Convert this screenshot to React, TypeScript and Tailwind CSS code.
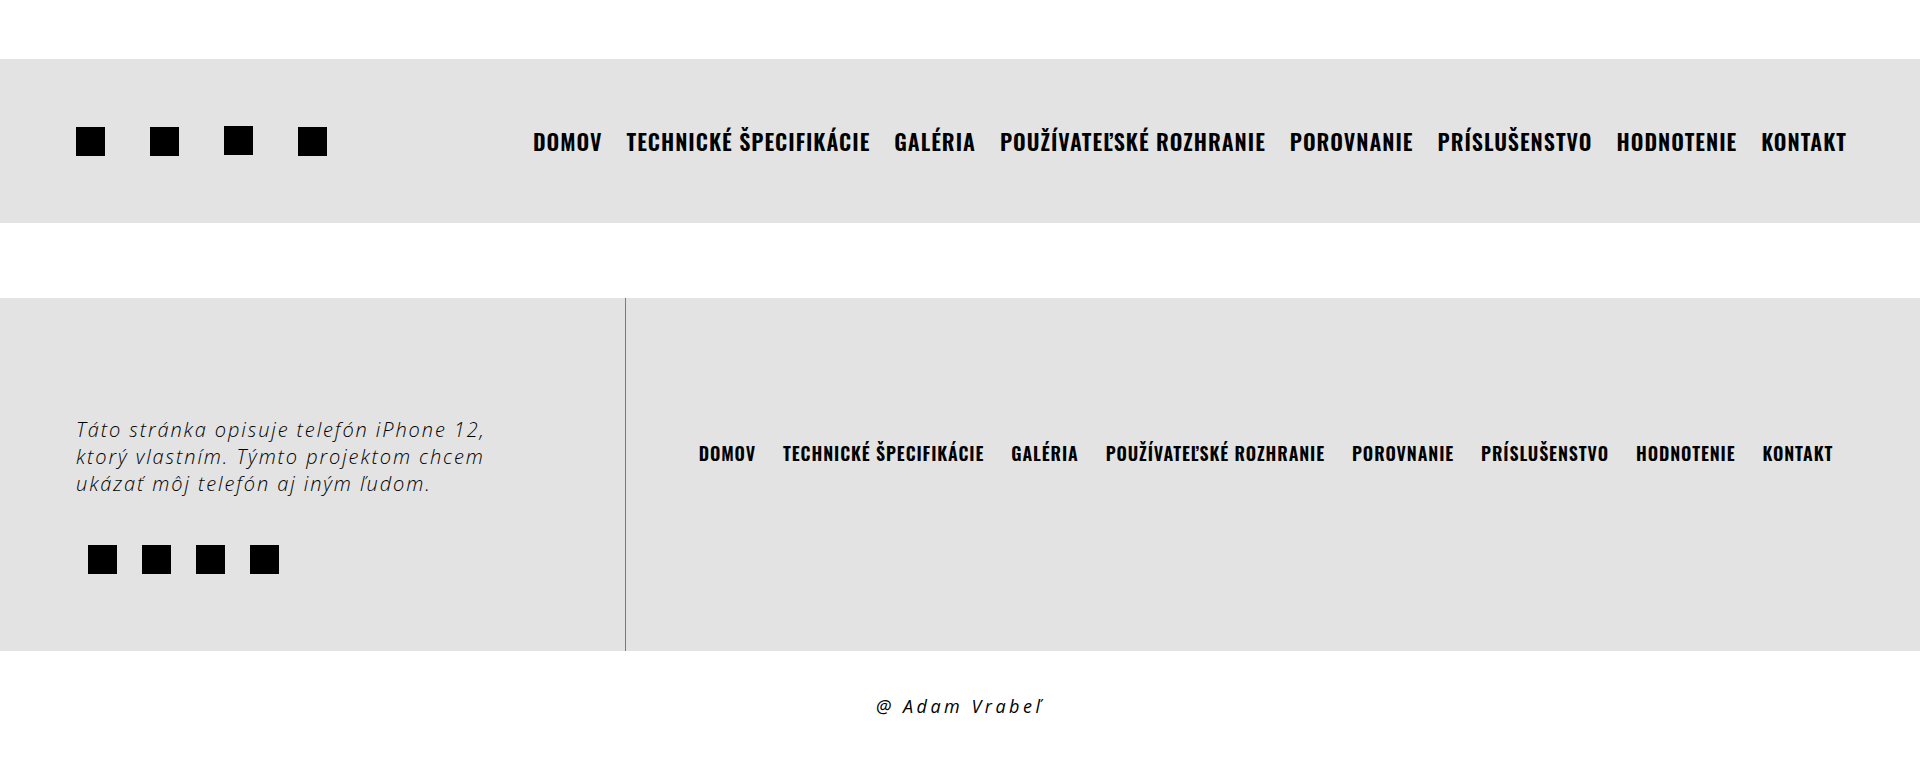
import React from 'react';

const links = [
  'DOMOV',
  'TECHNICKÉ ŠPECIFIKÁCIE',
  'GALÉRIA',
  'POUŽÍVATEĽSKÉ ROZHRANIE',
  'POROVNANIE',
  'PRÍSLUŠENSTVO',
  'HODNOTENIE',
  'KONTAKT',
];

const navFont = "font-['Oswald','Liberation_Sans',sans-serif]";

const Box = ({ className = '' }: { className?: string }) => (
  <span className={`block w-[29px] h-[29px] bg-black ${className}`} />
);

const Header = () => (
  <header className="mt-[59px] h-[164px] bg-[#e3e3e3] flex items-center justify-between pl-[76px] pr-[73px]">
    <div className="flex items-center gap-[45px]">
      <Box />
      <Box />
      <Box className="-translate-y-px" />
      <Box />
    </div>
    <nav className={`flex items-center gap-[24px] ${navFont}`}>
      {links.map((l) => (
        <a key={l} href="#" className="whitespace-nowrap text-[22px] font-semibold text-black tracking-[1px] leading-none">
          {l}
        </a>
      ))}
    </nav>
  </header>
);

const Info = () => (
  <section className="mt-[75px] h-[353px] bg-[#e3e3e3] flex">
    <div className="w-[626px] shrink-0 border-r border-[#7a7a7a] pl-[76px] pt-[118px]">
      <p className="w-[440px] text-[20px] leading-[27px] italic font-[350] tracking-[1.9px] text-black font-['Open_Sans',sans-serif]">
        Táto stránka opisuje telefón iPhone 12, ktorý vlastním. Týmto projektom chcem ukázať môj telefón aj iným ľudom.
      </p>
      <div className="mt-[48px] ml-[12px] flex gap-[25px]">
        <Box />
        <Box />
        <Box />
        <Box />
      </div>
    </div>
    <div className="flex-1 flex justify-center pt-[146px] pr-[14px]">
      <nav className={`flex items-start gap-[27px] ${navFont}`}>
        {links.map((l) => (
          <a key={l} href="#" className="whitespace-nowrap text-[18px] font-semibold text-black tracking-[0.9px] leading-none">
            {l}
          </a>
        ))}
      </nav>
    </div>
  </section>
);

const Footer = () => (
  <footer className="h-[110px] flex items-center justify-center">
    <p className="text-[18px] italic font-medium tracking-[3.5px] text-black font-['Open_Sans',sans-serif]">
      @ Adam Vrabeľ
    </p>
  </footer>
);

export default function App() {
  return (
    <div className="w-[1920px] bg-white">
      <Header />
      <Info />
      <Footer />
    </div>
  );
}
